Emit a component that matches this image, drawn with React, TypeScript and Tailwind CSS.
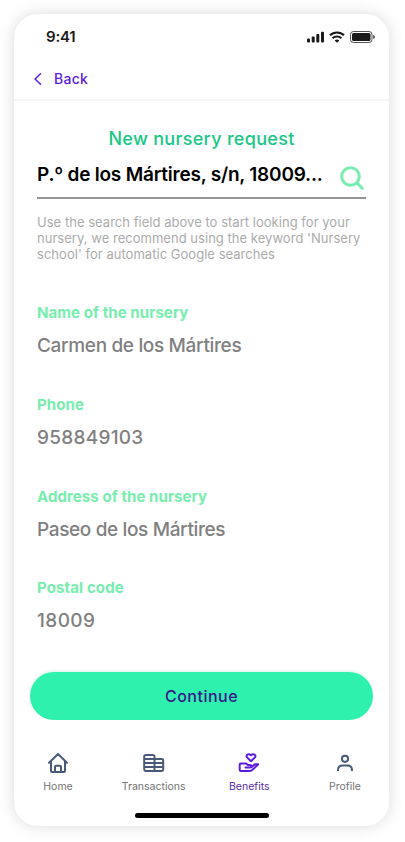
import type { ReactNode } from 'react';

interface Field {
  label: string;
  value: string;
  labelClass: string;
  valueClass: string;
}

interface NavItem {
  label: string;
  icon: ReactNode;
  active?: boolean;
}

const fields: Field[] = [
  { label: 'Name of the nursery', value: 'Carmen de los Mártires', labelClass: 'tracking-[0.08px]', valueClass: 'tracking-[-0.34px]' },
  { label: 'Phone', value: '958849103', labelClass: 'tracking-[0.1px]', valueClass: 'tracking-[0.26px]' },
  { label: 'Address of the nursery', value: 'Paseo de los Mártires', labelClass: 'tracking-[0.08px]', valueClass: 'tracking-[-0.36px]' },
  { label: 'Postal code', value: '18009', labelClass: 'tracking-[0.12px]', valueClass: 'tracking-[0.4px]' },
];

const HomeIcon = () => (
  <svg className="h-6 w-6" viewBox="0 0 24 24" fill="none" stroke="currentColor" strokeWidth={2} strokeLinecap="round" strokeLinejoin="round">
    <path d="M3 11.8 12 3l9 8.8M5 10v10q0 1 1 1h12q1 0 1-1V10M9 21v-5.2q0-1 1-1h4q1 0 1 1V21" />
  </svg>
);

const TransactionsIcon = () => (
  <svg className="h-6 w-6" viewBox="0 0 24 24" fill="none" stroke="currentColor" strokeWidth={2} strokeLinejoin="round">
    <path d="M3.8 4h7q1.7 0 1.7 1.7V20H3.6q-1.4 0-1.4-1.4V5.6Q2.2 4 3.8 4ZM12.5 8h7.3q1.4 0 1.4 1.4v9.2q0 1.4-1.4 1.4h-7.3M2.2 8h10.3M2.2 12h19M2.2 16h19" />
  </svg>
);

const BenefitsIcon = () => (
  <svg className="h-6 w-6" viewBox="0 0 24 24" fill="none" stroke="currentColor" strokeWidth={2} strokeLinecap="round" strokeLinejoin="round">
    <path d="m14 10.3-3.9-3.9C8.4 4.6 11.1 1.7 14 4.2c2.9-2.5 5.6.4 3.9 2.2Z" />
    <path d="M8.5 16.6h4.3c2.1 0 2.1-2.6 0-2.6h-1.9L9.2 12.6H3.9q-1.2 0-1.2 1.2v5q0 1.2 1.2 1.2h9c1 0 1.8-.4 2.5-1.1l5.8-5.7h-2.7c-.7 0-1.2.3-1.7.8l-2.5 2.4" />
  </svg>
);

const ProfileIcon = () => (
  <svg className="h-6 w-6" viewBox="0 0 24 24" fill="none" stroke="currentColor" strokeWidth={2}>
    <circle cx="12" cy="7.8" r="3.1" />
    <path d="M5 20v-.8c0-3 1.8-4.7 4.5-4.7h5c2.7 0 4.5 1.7 4.5 4.7v.8" />
  </svg>
);

const navItems: NavItem[] = [
  { label: 'Home', icon: <HomeIcon /> },
  { label: 'Transactions', icon: <TransactionsIcon /> },
  { label: 'Benefits', icon: <BenefitsIcon />, active: true },
  { label: 'Profile', icon: <ProfileIcon /> },
];

function StatusBar() {
  return (
    <div className="flex h-11 shrink-0 items-center justify-between pl-8 pr-[14px] text-[#1a1a1a]">
      <span className="pt-[2px] text-[15px] font-semibold leading-5 tracking-[-0.2px]">9:41</span>
      <div className="flex items-center gap-[5px] pt-[2px]">
        <svg className="h-3 w-[18px]" viewBox="0 0 18 12" fill="currentColor">
          <rect x="1" y="7.6" width="3" height="4" rx="1" />
          <rect x="5.7" y="5.4" width="3" height="6.2" rx="1" />
          <rect x="10.3" y="3.1" width="3" height="8.5" rx="1" />
          <rect x="15" y=".8" width="3" height="10.8" rx="1" />
        </svg>
        <svg className="h-3 w-4" viewBox="0 0 16 12" fill="none" stroke="currentColor" strokeWidth={2.1}>
          <path d="M1 4.3a10 10 0 0 1 14 0M3.6 7.3a6.3 6.3 0 0 1 8.8 0" />
          <path d="M5.6 9.5a3.6 3.6 0 0 1 4.8 0L8 11.8Z" fill="currentColor" stroke="none" />
        </svg>
        <svg className="h-3 w-[25px]" viewBox="0 0 25 12" fill="none">
          <rect x=".5" y=".5" width="21.5" height="11" rx="3" stroke="currentColor" strokeOpacity=".75" />
          <rect x="2" y="2" width="18.5" height="8" rx="1.5" fill="currentColor" />
          <path d="M23.4 4v4c.8-.3 1.3-1.1 1.3-2s-.5-1.7-1.3-2Z" fill="currentColor" />
        </svg>
      </div>
    </div>
  );
}

function FormField({ label, value, labelClass, valueClass }: Field) {
  return (
    <div className="h-[91.7px]">
      <div className={`text-[15px] font-bold leading-5 text-[#77edae] ${labelClass}`}>{label}</div>
      <div className={`mt-[11px] text-[19px] font-medium leading-6 text-[#808080] ${valueClass}`}>{value}</div>
    </div>
  );
}

export default function App() {
  return (
    <div className="h-[842px] w-[405px] overflow-hidden bg-white p-[14px] font-['Inter',sans-serif]">
      <div className="flex h-[812px] w-[375px] flex-col rounded-[24px] bg-white shadow-[0_0_16px_rgba(0,0,0,0.15)]">
        <StatusBar />

        <button className="flex h-[43px] shrink-0 items-center gap-[12px] border-b-2 border-[#f5f5f5] pl-5 text-[#5b1be0]">
          <svg className="h-3 w-2" viewBox="0 0 8 12" fill="none" stroke="currentColor" strokeWidth={1.5} strokeLinecap="round" strokeLinejoin="round">
            <path d="M6.5.8 1 6l5.5 5.2" />
          </svg>
          <span className="text-sm font-medium tracking-[0.3px]">Back</span>
        </button>

        <div className="px-[23px] pt-[24px]">
          <h1 className="text-center text-[18px] font-medium leading-7 tracking-[0.3px] text-[#18c786]">New nursery request</h1>
          <div className="flex h-[46px] items-center justify-between border-b-2 border-[#969696]">
            <span className="whitespace-nowrap pt-px text-[19px] font-semibold tracking-[-0.22px] text-black">
              P.º de los Mártires, s/n, 18009...
            </span>
            <svg className="mr-[2px] mt-[6px] h-6 w-6" viewBox="0 0 24 24" fill="none" stroke="#77edae" strokeWidth={3} strokeLinecap="round">
              <circle cx="10.5" cy="10.5" r="8.8" />
              <path d="m17 17 5.3 5.3" />
            </svg>
          </div>
          <p className="mt-[15px] whitespace-nowrap text-[13px] leading-4 tracking-[0.03px] text-[#ababab]">
            Use the search field above to start looking for your
            <br />
            nursery, we recommend using the keyword 'Nursery
            <br />
            school' for automatic Google searches
          </p>
          <div className="mt-[41.4px]">
            {fields.map((field) => (
              <FormField key={field.label} {...field} />
            ))}
          </div>
        </div>

        <div className="mt-auto px-4">
          <button className="h-12 w-full rounded-full bg-[#2ef1ad] text-base font-medium tracking-[0.5px] text-[#35168c] shadow-[0_-2px_1px_#e7f9f1]">
            Continue
          </button>
          <nav className="mt-[31px] flex justify-between">
            {navItems.map((item) => (
              <div
                key={item.label}
                className={`flex w-[56px] flex-col items-center ${item.active ? 'text-[#5b1be0]' : 'text-[#475b78]'}`}
              >
                {item.icon}
                <span className={`mt-1 text-[10.5px] leading-4 ${item.active ? 'text-[#5b2ba8]' : 'text-[#737373]'}`}>
                  {item.label}
                </span>
              </div>
            ))}
          </nav>
          <div className="mx-auto mb-[8px] mt-[18px] h-[5px] w-[134px] rounded-full bg-black" />
        </div>
      </div>
    </div>
  );
}
